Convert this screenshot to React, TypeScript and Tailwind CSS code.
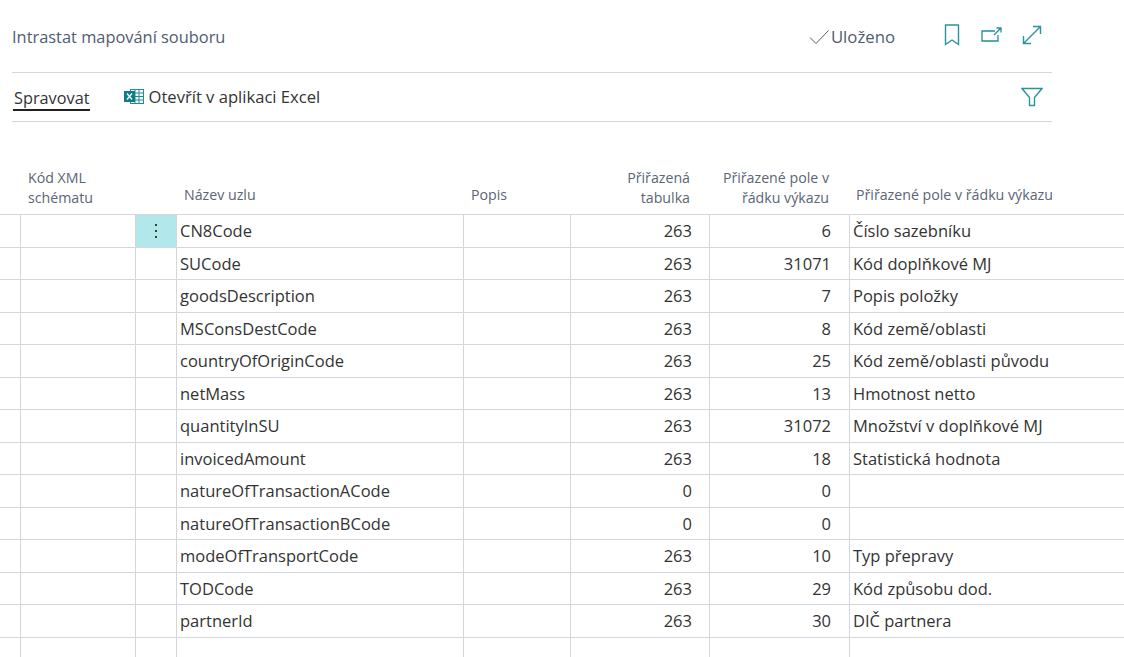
const font = "font-['Open_Sans','Noto_Sans',sans-serif]";

const rows = [
  ["CN8Code", "263", "6", "Číslo sazebníku"],
  ["SUCode", "263", "31071", "Kód doplňkové MJ"],
  ["goodsDescription", "263", "7", "Popis položky"],
  ["MSConsDestCode", "263", "8", "Kód země/oblasti"],
  ["countryOfOriginCode", "263", "25", "Kód země/oblasti původu"],
  ["netMass", "263", "13", "Hmotnost netto"],
  ["quantityInSU", "263", "31072", "Množství v doplňkové MJ"],
  ["invoicedAmount", "263", "18", "Statistická hodnota"],
  ["natureOfTransactionACode", "0", "0", ""],
  ["natureOfTransactionBCode", "0", "0", ""],
  ["modeOfTransportCode", "263", "10", "Typ přepravy"],
  ["TODCode", "263", "29", "Kód způsobu dod."],
  ["partnerId", "263", "30", "DIČ partnera"],
];

function Row({ row, first }: { row?: string[]; first?: boolean }) {
  return (
    <div className="flex h-[32.5px] border-b border-[#d4d6de] text-[16.5px] text-[#333333]">
      <div className="w-[21px] shrink-0 border-r border-[#d4d6de]" />
      <div className="w-[115px] shrink-0 border-r border-[#d4d6de]" />
      <div className={`w-[41px] shrink-0 border-r border-[#d4d6de] flex items-center justify-center ${first ? "bg-[#b2e7ec]" : ""}`}>
        {first && (
          <svg width="4" height="18" viewBox="0 0 4 18" fill="#3a3a3a">
            <rect x="1" y="2" width="2" height="2" />
            <rect x="1" y="8" width="2" height="2" />
            <rect x="1" y="14" width="2" height="2" />
          </svg>
        )}
      </div>
      <div className="w-[287px] shrink-0 border-r border-[#d4d6de] pl-[3px] leading-[32px] whitespace-nowrap">{row?.[0]}</div>
      <div className="w-[107px] shrink-0 border-r border-[#d4d6de]" />
      <div className="w-[139px] shrink-0 border-r border-[#d4d6de] pr-[17px] text-right leading-[32px]">{row?.[1]}</div>
      <div className="w-[140px] shrink-0 border-r border-[#d4d6de] pr-[18px] text-right leading-[32px]">{row?.[2]}</div>
      <div className="flex-1 pl-[3px] leading-[32px] whitespace-nowrap">{row?.[3]}</div>
    </div>
  );
}

export default function App() {
  return (
    <div className={`${font} w-[1124px] h-[657px] overflow-hidden bg-white`}>
      <div className="ml-3 w-[1040px]">
        <div className="flex h-[73px] items-center border-b border-[#d4d6de] text-[#505c6f]">
          <h1 className="text-[16.4px] pt-[2px]">Intrastat mapování souboru</h1>
          <div className="ml-auto flex items-center gap-[2px] pt-[2px] text-[16.75px]">
            <svg width="20" height="18" viewBox="0 0 20 18" fill="none" stroke="#505c6f" strokeWidth="1">
              <path d="M1 9.5 L7 15.5 L19.5 2.5" />
            </svg>
            Uloženo
          </div>
          <svg className="ml-[48px] mb-[2px]" width="18" height="22" viewBox="0 0 18 22" fill="none" stroke="#2a939c" strokeWidth="1.4">
            <path d="M2.5 1H15.5V20.5L9 16L2.5 20.5Z" />
          </svg>
          <svg className="ml-[20px] mb-[2px]" width="22" height="18" viewBox="0 0 22 18" fill="none" stroke="#1f8e98" strokeWidth="1.3">
            <path d="M14 5H1V15H17V9" />
            <path d="M13 9L19.5 2.5M15.5 2H20V6.5" />
          </svg>
          <svg className="ml-[18px] mr-[9px] mb-[2px]" width="22" height="22" viewBox="0 0 22 22" fill="none" stroke="#2a939c" strokeWidth="1.4">
            <path d="M3 19L19 3M12 2.5H19.5V10M2.5 12V19.5H10" />
          </svg>
        </div>
        <div className="flex h-[49px] items-center border-b border-[#d4d6de]">
          <div className="ml-[1px] h-[38px] pl-[1px] pt-[12px] border-b-2 border-[#212121] text-[16.3px] leading-[26px] text-[#333333] self-start box-border">
            Spravovat
          </div>
          <svg className="ml-[34px]" width="21" height="18" viewBox="0 0 21 18">
            <rect x="6.5" y="1.5" width="13" height="14" fill="white" stroke="#1f8e98" />
            <path d="M11 1.5V15.5M15 1.5V15.5M7 5H19M7 8.5H19M7 12H19" stroke="#1f8e98" />
            <rect x="0" y="3" width="11" height="11" fill="#0e7c86" />
            <path d="M3 5.5L8 11.5M8 5.5L3 11.5" stroke="white" strokeWidth="1.3" />
          </svg>
          <span className="ml-[4px] text-[16.6px] text-[#333333]">Otevřít v aplikaci Excel</span>
          <svg className="ml-auto mr-[9px]" width="22" height="20" viewBox="0 0 22 20" fill="none" stroke="#2a939c" strokeWidth="1.4">
            <path d="M1 1.5H21L13.5 10.5V18.5H8.5V10.5Z" />
          </svg>
        </div>
      </div>

      <div className="flex h-[93px] border-b border-[#d4d6de] text-[14.2px] leading-[19.5px] text-[#5a6577]">
        <div className="w-[21px] shrink-0" />
        <div className="w-[115px] shrink-0 pl-[7px] pt-[46px]">Kód XML<br />schématu</div>
        <div className="w-[41px] shrink-0" />
        <div className="w-[287px] shrink-0 pl-[7px] pt-[63px]">Název uzlu</div>
        <div className="w-[107px] shrink-0 pl-[7px] pt-[63px]">Popis</div>
        <div className="w-[139px] shrink-0 pr-[20px] pt-[46px] text-right">Přiřazená<br />tabulka</div>
        <div className="w-[140px] shrink-0 pr-[21px] pt-[46px] text-right">Přiřazené pole v<br />řádku výkazu</div>
        <div className="flex-1 pl-[6px] pt-[63px] whitespace-nowrap">Přiřazené pole v řádku výkazu</div>
      </div>

      {rows.map((r, i) => (
        <Row key={r[0]} row={r} first={i === 0} />
      ))}
      <Row />
    </div>
  );
}
